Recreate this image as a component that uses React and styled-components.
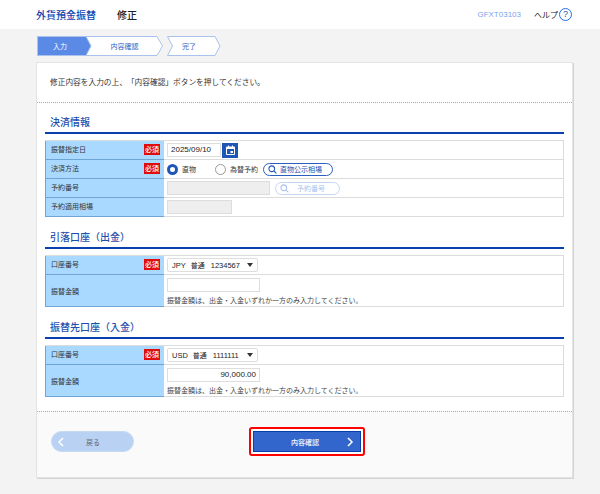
import React from 'react'
import styled, { createGlobalStyle } from 'styled-components'

const FONT = `"Noto Sans CJK JP", "Liberation Sans", sans-serif`
const NAVY = '#0a3fb0'

const GlobalStyle = createGlobalStyle`
  * { box-sizing: border-box; }
  html, body { margin: 0; padding: 0; }
  body {
    width: 600px;
    height: 494px;
    overflow: hidden;
    background: #f3f3f3;
    font-family: ${FONT};
    color: #333;
    text-spacing-trim: space-all;
  }
`

function SearchIcon({ color }) {
  return (
    <svg width="9" height="9" viewBox="0 0 10 10" fill="none" stroke={color} strokeWidth="1.2">
      <circle cx="4.2" cy="4.2" r="3.2" />
      <path d="M6.6 6.6 9.3 9.3" />
    </svg>
  )
}

function CalendarIcon() {
  return (
    <svg width="11" height="11" viewBox="0 0 11 11">
      <rect x="1" y="1.5" width="9" height="8.5" rx="1" fill="#fff" />
      <rect x="2" y="4" width="7" height="5" fill="#1e56b8" />
      <rect x="5.5" y="6" width="2.5" height="2" fill="#fff" />
      <rect x="3" y="0.5" width="1" height="2" fill="#fff" />
      <rect x="7" y="0.5" width="1" height="2" fill="#fff" />
    </svg>
  )
}

function Steps() {
  return (
    <StepBar>
      <svg width="184" height="20" viewBox="0 0 184 20">
        <path d="M130.5.5h47.500l5 9.500-5 9.500h-47.500l5-9.500z" fill="#fff" stroke="#a9c3ee" />
        <path d="M48.500.5h71.500l5.500 9.500-5.500 9.500h-71.500l5-9.500z" fill="#fff" stroke="#a9c3ee" />
        <path d="M.5.5h48.500l5 9.500-5 9.500H.5z" fill="#5b8ae6" stroke="#a9c3ee" />
      </svg>
      <StepLabels>
        <StepLabel $w={46} $active>入力</StepLabel>
        <StepLabel $w={83}>内容確認</StepLabel>
        <StepLabel $w={46}>完了</StepLabel>
      </StepLabels>
    </StepBar>
  )
}

function Field({ label, required, tall, children }) {
  return (
    <Row>
      <LabelCell $tall={tall}>
        <span>{label}</span>
        {required && <Required>必須</Required>}
      </LabelCell>
      <ValueCell $tall={tall}>{children}</ValueCell>
    </Row>
  )
}

function Account({ currency, number }) {
  return (
    <SelectBox>
      <span>{currency}</span>
      <AccountType>普通</AccountType>
      <span>{number}</span>
      <Caret />
    </SelectBox>
  )
}

const AMOUNT_NOTE = '振替金額は、出金・入金いずれか一方のみ入力してください。'

export default function App() {
  return (
    <>
      <GlobalStyle />
      <Header>
        <HeaderTitle>外貨預金振替</HeaderTitle>
        <HeaderSub>修正</HeaderSub>
        <ScreenId>GFXT03103</ScreenId>
        <Help>ヘルプ</Help>
        <HelpIcon>?</HelpIcon>
      </Header>

      <Main>
        <Steps />
        <Card>
          <Intro>修正内容を入力の上、「内容確認」ボタンを押してください。</Intro>

          <Body>
            <Section>
              <SectionTitle>決済情報</SectionTitle>
              <Table>
                <Field label="振替指定日" required>
                  <DateInput>2025/09/10</DateInput>
                  <CalendarButton><CalendarIcon /></CalendarButton>
                </Field>
                <Field label="決済方法" required>
                  <Radio $checked />
                  <RadioText $w={33}>直物</RadioText>
                  <Radio />
                  <RadioText $w={29}>為替予約</RadioText>
                  <PillButton $w={70} $ml={4}>
                    <SearchIcon color="#1e56b8" />
                    <span>直物公示相場</span>
                  </PillButton>
                </Field>
                <Field label="予約番号">
                  <DisabledInput $w={103} />
                  <PillButton $w={65} $ml={5} $disabled $gap={8}>
                    <SearchIcon color="#a9c3ee" />
                    <span>予約番号</span>
                  </PillButton>
                </Field>
                <Field label="予約適用相場">
                  <DisabledInput $w={65} />
                </Field>
              </Table>
            </Section>

            <Section>
              <SectionTitle>引落口座（出金）</SectionTitle>
              <Table>
                <Field label="口座番号" required>
                  <Account currency="JPY" number="1234567" />
                </Field>
                <Field label="振替金額" tall>
                  <AmountBox />
                  <Note>{AMOUNT_NOTE}</Note>
                </Field>
              </Table>
            </Section>

            <Section>
              <SectionTitle>振替先口座（入金）</SectionTitle>
              <Table>
                <Field label="口座番号" required>
                  <Account currency="USD" number="1111111" />
                </Field>
                <Field label="振替金額" tall>
                  <AmountBox>90,000.00</AmountBox>
                  <Note>{AMOUNT_NOTE}</Note>
                </Field>
              </Table>
            </Section>
          </Body>

          <Footer>
            <BackButton>
              <svg width="8" height="10" viewBox="0 0 8 10" fill="none" stroke="#fff" strokeWidth="1.5">
                <path d="M6 1 2 5l4 4" />
              </svg>
              <span>戻る</span>
            </BackButton>
            <Highlight>
              <PrimaryButton>
                <span>内容確認</span>
                <svg width="8" height="10" viewBox="0 0 8 10" fill="none" stroke="#fff" strokeWidth="1.5">
                  <path d="M2 1l4 4-4 4" />
                </svg>
              </PrimaryButton>
            </Highlight>
          </Footer>
        </Card>
      </Main>
    </>
  )
}

const Header = styled.header`
  height: 29px;
  background: #fff;
  display: flex;
  align-items: center;
  padding: 0 28px 1px 36px;
`

const HeaderTitle = styled.h1`
  margin: 0;
  font-size: 10px;
  font-weight: 500;
  color: ${NAVY};
`

const HeaderSub = styled.div`
  margin-left: 21px;
  font-size: 10px;
  font-weight: 500;
  color: #222;
`

const ScreenId = styled.div`
  margin-left: auto;
  font-family: "Liberation Sans", sans-serif;
  font-size: 8px;
  color: #7fa3ea;
`

const Help = styled.div`
  margin-left: 13px;
  font-size: 8px;
  color: #222;
`

const HelpIcon = styled.div`
  width: 13px;
  height: 13px;
  margin-left: 1px;
  border: 1.5px solid #2a6fe0;
  border-radius: 50%;
  font-family: "Liberation Sans", sans-serif;
  font-size: 9px;
  line-height: 10px;
  text-align: center;
  color: #1e56b8;
`

const Main = styled.main`
  padding: 7px 28px 0 37px;
`

const StepBar = styled.div`
  position: relative;
  height: 20px;
  width: 184px;
  svg { display: block; }
`

const StepLabels = styled.div`
  position: absolute;
  inset: 0;
  display: flex;
`

const StepLabel = styled.div`
  width: ${p => p.$w}px;
  font-size: 7px;
  line-height: 20px;
  text-align: center;
  color: ${p => (p.$active ? '#fff' : '#3563c4')};
`

const Card = styled.section`
  margin-top: 7px;
  width: 535px;
  height: 414px;
  display: flex;
  flex-direction: column;
  background: #fff;
  box-shadow: 0 0 0 1px #e3e3e3, 1px 1px 0 1px #d4d4d4;
`

const Intro = styled.p`
  margin: 0;
  height: 40px;
  padding: 13px 0 0 13px;
  font-size: 7.7px;
  line-height: 12px;
  color: #333;
  border-bottom: 1px dotted #aaa;
`

const Body = styled.div`
  flex: 1;
  padding: 11px 8px 0;
  display: flex;
  flex-direction: column;
  gap: 12px;
`

const Section = styled.div``

const SectionTitle = styled.h2`
  margin: 0 0 6px;
  height: 20px;
  padding-left: 5px;
  font-size: 10px;
  line-height: 16px;
  font-weight: 500;
  color: #1e4fae;
  border-bottom: 2px solid ${NAVY};
`

const Table = styled.div`
  border-top: 1px solid #dcdcdc;
`

const Row = styled.div`
  display: flex;
`

const LabelCell = styled.div`
  width: 119px;
  flex: none;
  height: ${p => (p.$tall ? 32 : 19)}px;
  display: flex;
  align-items: center;
  justify-content: space-between;
  padding: 0 4px ${p => (p.$tall ? 0 : 2)}px 5px;
  font-size: 7px;
  color: #333;
  background: #aad9ff;
  border-left: 1px solid #6fa5d5;
  border-bottom: 1px solid #6fa5d5;
`

const ValueCell = styled.div`
  flex: 1;
  height: ${p => (p.$tall ? 32 : 19)}px;
  padding: ${p => (p.$tall ? '3px 0 1px 3px' : '0 0 0 3px')};
  display: flex;
  flex-direction: ${p => (p.$tall ? 'column' : 'row')};
  align-items: ${p => (p.$tall ? 'flex-start' : 'center')};
  justify-content: ${p => (p.$tall ? 'space-between' : 'flex-start')};
  border-bottom: 1px solid #dcdcdc;
  border-right: 1px solid #dcdcdc;
`

const Required = styled.span`
  width: 16px;
  height: 11px;
  background: #e00b0b;
  color: #fff;
  font-size: 7px;
  font-weight: 500;
  line-height: 11px;
  text-align: center;
`

const DateInput = styled.div`
  width: 54px;
  height: 14px;
  padding-left: 3px;
  border: 1px solid #ddd;
  font-family: "Liberation Sans", sans-serif;
  font-size: 8px;
  line-height: 12px;
  color: #222;
`

const CalendarButton = styled.div`
  width: 16px;
  height: 15px;
  margin-left: 1px;
  background: #1e56b8;
  display: flex;
  align-items: center;
  justify-content: center;
`

const Radio = styled.span`
  width: 11px;
  height: 11px;
  flex: none;
  border-radius: 50%;
  background: #fff;
  border: ${p => (p.$checked ? '3px solid #1e56b8' : '1px solid #999')};
`

const RadioText = styled.span`
  width: ${p => p.$w}px;
  margin-left: 4px;
  font-size: 7px;
  color: #333;
  white-space: nowrap;
`

const PillButton = styled.div`
  width: ${p => p.$w}px;
  height: 13px;
  margin-left: ${p => p.$ml}px;
  padding-left: 4px;
  display: flex;
  align-items: center;
  gap: ${p => p.$gap || 3}px;
  border: 1px solid ${p => (p.$disabled ? '#c5d6f2' : '#2a5fc0')};
  border-radius: 7px;
  background: #fff;
  font-size: 7px;
  white-space: nowrap;
  color: ${p => (p.$disabled ? '#a9c3ee' : '#1e4fae')};
`

const DisabledInput = styled.div`
  width: ${p => p.$w}px;
  height: 14px;
  background: #eee;
  border: 1px solid #ddd;
`

const SelectBox = styled.div`
  width: 91px;
  height: 14px;
  padding: 0 4px;
  display: flex;
  align-items: center;
  border: 1px solid #ddd;
  border-radius: 2px;
  font-family: "Liberation Sans", "Noto Sans CJK JP", sans-serif;
  font-size: 7.5px;
  white-space: nowrap;
  color: #222;
`

const AccountType = styled.span`
  margin: 0 6px 0 5px;
  font-family: ${FONT};
  font-size: 7px;
`

const Caret = styled.i`
  margin-left: auto;
  width: 0;
  height: 0;
  border-left: 3px solid transparent;
  border-right: 3px solid transparent;
  border-top: 4px solid #333;
`

const AmountBox = styled.div`
  width: 93px;
  height: 14px;
  padding-right: 3px;
  border: 1px solid #ddd;
  font-family: "Liberation Sans", sans-serif;
  font-size: 8px;
  line-height: 12px;
  text-align: right;
  color: #222;
`

const Note = styled.div`
  font-size: 7px;
  line-height: 10px;
  white-space: nowrap;
  color: #444;
`

const Footer = styled.footer`
  height: 66px;
  margin-top: 14px;
  padding: 15px 0 0 14px;
  display: flex;
  align-items: flex-start;
  background: #fafafa;
  border-top: 1px dotted #aaa;
`

const BackButton = styled.div`
  width: 83px;
  height: 21px;
  margin-top: 4px;
  padding-left: 5px;
  display: flex;
  align-items: center;
  border: 1px solid #c5d9f5;
  border-radius: 11px;
  background: #b9d2f4;
  font-size: 7px;
  color: #667;
  span { margin-left: 21px; }
`

const Highlight = styled.div`
  margin-left: 115px;
  padding: 2px;
  border: 2px solid #f00;
  border-radius: 3px;
  background: #fff;
`

const PrimaryButton = styled.div`
  width: 108px;
  height: 21px;
  padding: 0 6px 0 37px;
  display: flex;
  align-items: center;
  justify-content: space-between;
  background: #3366cc;
  border: 1px solid #0a3fb0;
  font-size: 7px;
  font-weight: 500;
  color: #fff;
`
